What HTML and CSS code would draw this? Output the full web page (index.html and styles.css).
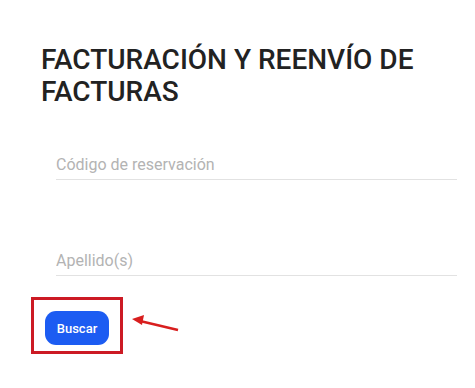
FILE: index.html
```html
<!DOCTYPE html>
<html lang="es">
<head>
<meta charset="utf-8">
<link rel="stylesheet" href="styles.css">
</head>
<body>
<main class="page">
  <h1 class="title">FACTURACIÓN Y REENVÍO DE FACTURAS</h1>
  <form class="form">
    <label class="field"><input class="input" type="text" placeholder="Código de reservación"></label>
    <label class="field field-second"><input class="input" type="text" placeholder="Apellido(s)"></label>
    <div class="actions">
      <div class="highlight">
        <button type="button" class="btn">Buscar</button>
      </div>
      <svg class="arrow" width="50" height="20" viewBox="0 0 50 20">
        <line x1="8" y1="6" x2="46" y2="15" stroke="#d81e1e" stroke-width="2.5"/>
        <polygon points="0,4 12,0 10,10" fill="#d81e1e"/>
      </svg>
    </div>
  </form>
</main>
</body>
</html>
```
FILE: styles.css
```css
html, body { margin: 0; padding: 0; background: #fff; }
body { font-family: Roboto, "Liberation Sans", sans-serif; }
.page { padding: 44px 0 0 41px; width: 416px; }
.title {
  margin: 0;
  font-size: 28px;
  line-height: 32px;
  font-weight: 500;
  color: #222;
  width: 400px;
}
.form { margin-top: 39px; display: flex; flex-direction: column; }
.field { display: block; margin-left: 15px; border-bottom: 1px solid #e2e2e2; }
.field-second { margin-top: 63px; }
.input {
  box-sizing: border-box;
  border: 0; outline: none; margin: 0;
  padding: 3px 0 0 0;
  width: 100%;
  font-family: Roboto, "Liberation Sans", sans-serif;
  font-size: 16px;
  line-height: 29px;
  height: 32px;
  color: #333;
  background: transparent;
}
.input::placeholder { color: #b3b3b3; }
.actions { display: flex; align-items: center; margin-top: 21px; margin-left: -10px; }
.highlight { border: 3px solid #cc1a24; padding: 11px 11px 6px 11px; }
.btn {
  display: block;
  background: #1c5cf2;
  color: #fff;
  border: 0;
  border-radius: 11px;
  width: 64px; height: 34px;
  font-family: Roboto, "Liberation Sans", sans-serif;
  font-size: 13px; font-weight: 500;
  padding: 0;
}
.arrow { margin-left: 9px; margin-top: -2px; }
```
